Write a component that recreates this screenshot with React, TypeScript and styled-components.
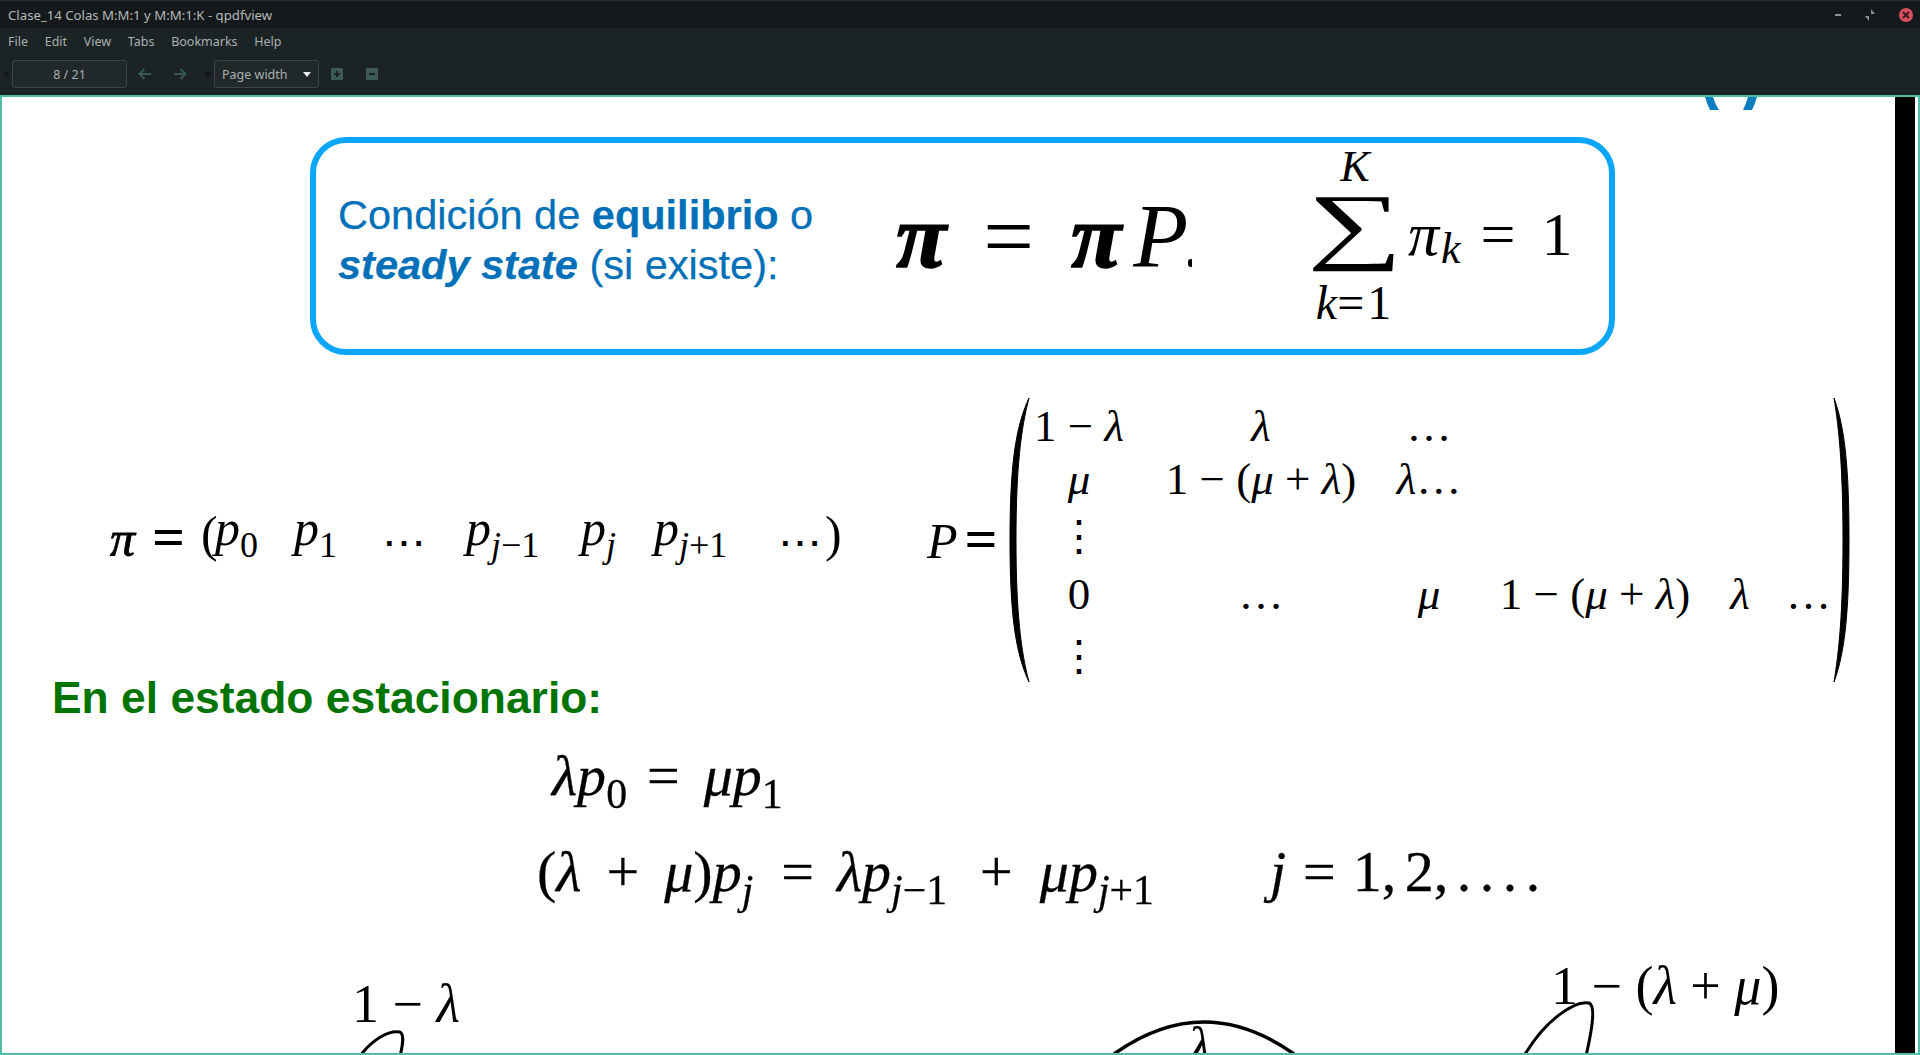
import React from 'react';
import styled, { createGlobalStyle } from 'styled-components';

const GlobalStyle = createGlobalStyle`
  html, body {
    margin: 0;
    padding: 0;
    height: 100%;
    overflow: hidden;
    background: #1b2325;
  }
  #root {
    height: 100%;
  }
`;

const MENU_ITEMS = ['File', 'Edit', 'View', 'Tabs', 'Bookmarks', 'Help'];
const VECTOR_COLUMNS = '42px 49px 14px 79px 88px 84px 115px 73px 124px 47px 20px';

const App = () => {
  return (
    <>
      <GlobalStyle />
      <Window>
        <TitleBar>
          <TitleText>Clase_14 Colas M:M:1 y M:M:1:K - qpdfview</TitleText>
          <WindowControls>
            <MinimizeIcon />
            <svg width="10" height="12" viewBox="0 0 10 12">
              <path d="M6 0 L6 5 L10 5 Z M0 7 L4 7 L4 12 Z" fill="#8c9293" />
            </svg>
            <CloseButton>
              <svg width="8" height="8" viewBox="0 0 8 8">
                <path d="M1 1 L7 7 M7 1 L1 7" stroke="#3a1a20" strokeWidth="2" />
              </svg>
            </CloseButton>
          </WindowControls>
        </TitleBar>
        <MenuBar>
          {MENU_ITEMS.map((item) => (
            <MenuItem key={item}>{item}</MenuItem>
          ))}
        </MenuBar>
        <ToolBar>
          <Grip />
          <PageField>8 / 21</PageField>
          <ArrowButton>
            <svg width="14" height="12" viewBox="0 0 14 12">
              <path d="M13 6 H2 M6.5 1 L1.5 6 L6.5 11" fill="none" stroke="#37584f" strokeWidth="2" />
            </svg>
          </ArrowButton>
          <ArrowButton>
            <svg width="14" height="12" viewBox="0 0 14 12">
              <path d="M1 6 H12 M7.5 1 L12.5 6 L7.5 11" fill="none" stroke="#37584f" strokeWidth="2" />
            </svg>
          </ArrowButton>
          <ComboGrip />
          <ScaleCombo>
            Page width
            <ComboArrow />
          </ScaleCombo>
          <ZoomIcon>
            <svg width="12" height="12" viewBox="0 0 12 12">
              <path d="M0 1 Q0 0 1 0 H11 Q12 0 12 1 V11 Q12 12 11 12 H1 Q0 12 0 11 Z" fill="#3d5a55" />
              <path d="M6 3 V9 M3 6 H9" stroke="#1b2325" strokeWidth="2" />
            </svg>
          </ZoomIcon>
          <ZoomIcon>
            <svg width="12" height="12" viewBox="0 0 12 12">
              <path d="M0 1 Q0 0 1 0 H11 Q12 0 12 1 V11 Q12 12 11 12 H1 Q0 12 0 11 Z" fill="#3d5a55" />
              <path d="M3 6 H9" stroke="#1b2325" strokeWidth="2" />
            </svg>
          </ZoomIcon>
        </ToolBar>
        <Viewer>
          <Sheet>
            <TopClip viewBox="0 0 60 14" width="60" height="14">
              <path d="M3 0 L11 0 Q13 7 17 13 L8 13 Q5 7 3 0 Z M55 0 L46 0 Q44 7 41 13 L50 13 Q53 7 55 0 Z" fill="#0a7cc0" />
            </TopClip>
            <Callout>
              <CalloutText>
                Condición de <b>equilibrio</b> o
                <br />
                <b>
                  <i>steady state</i>
                </b>{' '}
                (si existe):
              </CalloutText>
              <BalanceEq>
                <BoldPi>π</BoldPi>
                <BalanceEquals>=</BalanceEquals>
                <BoldPi>π</BoldPi>
                <BigP>P</BigP>
                <ClippedDot />
              </BalanceEq>
              <SumBlock>
                <SumLimit>K</SumLimit>
                <SumSign>∑</SumSign>
                <SumLimit $wide>
                  k<Upright>=1</Upright>
                </SumLimit>
              </SumBlock>
              <SumTerm>
                <i>π</i>
                <SumIndex>k</SumIndex>
                <SumEquals>=</SumEquals>
                <span>1</span>
              </SumTerm>
            </Callout>

            <FormulaRow>
              <Vector>
                <Sym $drop>π</Sym>
                <HeavyEq $drop>=</HeavyEq>
                <Paren>(</Paren>
                <Sym>
                  p<Sub>0</Sub>
                </Sym>
                <Sym>
                  p<Sub>1</Sub>
                </Sym>
                <Dots>⋯</Dots>
                <Sym>
                  p
                  <Sub>
                    <i>j</i>−1
                  </Sub>
                </Sym>
                <Sym>
                  p
                  <Sub>
                    <i>j</i>
                  </Sub>
                </Sym>
                <Sym>
                  p
                  <Sub>
                    <i>j</i>+1
                  </Sub>
                </Sym>
                <Dots>⋯</Dots>
                <Paren>)</Paren>
              </Vector>
              <MatrixLabel>
                <Sym>P</Sym>
                <HeavyEq>=</HeavyEq>
              </MatrixLabel>
              <Matrix>
                <MatrixBracket width="21" height="284" viewBox="0 0 21 284">
                  <path d="M20 0 C6 30 1 70 1 142 C1 214 6 254 20 284 C12 254 7 214 7 142 C7 70 12 30 20 0 Z" fill="#000" stroke="#000" />
                </MatrixBracket>
                <MatrixGrid>
                  <Cell>
                    1 − <i>λ</i>
                  </Cell>
                  <Cell>
                    <i>λ</i>
                  </Cell>
                  <Cell>…</Cell>
                  <Cell />
                  <Cell />
                  <Cell />

                  <Cell>
                    <i>μ</i>
                  </Cell>
                  <Cell>
                    1 − (<i>μ</i> + <i>λ</i>)
                  </Cell>
                  <Cell>
                    <i>λ</i>…
                  </Cell>
                  <Cell />
                  <Cell />
                  <Cell />

                  <Cell>
                    <VDots>⋮</VDots>
                  </Cell>
                  <Cell />
                  <Cell />
                  <Cell />
                  <Cell />
                  <Cell />

                  <Cell>0</Cell>
                  <Cell>…</Cell>
                  <Cell>
                    <i>μ</i>
                  </Cell>
                  <Cell>
                    1 − (<i>μ</i> + <i>λ</i>)
                  </Cell>
                  <Cell>
                    <i>λ</i>
                  </Cell>
                  <Cell>…</Cell>

                  <Cell>
                    <VDots>⋮</VDots>
                  </Cell>
                  <Cell />
                  <Cell />
                  <Cell />
                  <Cell />
                  <Cell />
                </MatrixGrid>
                <MatrixBracket width="17" height="284" viewBox="0 0 17 284">
                  <path d="M1 0 C12 30 16 70 16 142 C16 214 12 254 1 284 C6 254 10 214 10 142 C10 70 6 30 1 0 Z" fill="#000" stroke="#000" />
                </MatrixBracket>
              </Matrix>
            </FormulaRow>

            <SectionHeading>En el estado estacionario:</SectionHeading>

            <ScannedEq $indent={550} $top={27}>
              <i>λp</i>
              <Sub>0</Sub>
              <Gap $w={20} />=<Gap $w={24} />
              <i>μp</i>
              <Sub>1</Sub>
            </ScannedEq>
            <ScannedEq $indent={535} $top={44}>
              (<i>λ</i>
              <Gap $w={25} />+<Gap $w={25} />
              <i>μ</i>)<i>p</i>
              <Sub>
                <i>j</i>
              </Sub>
              <Gap $w={28} />=<Gap $w={23} />
              <i>λp</i>
              <Sub>
                <i>j</i>−1
              </Sub>
              <Gap $w={33} />+<Gap $w={27} />
              <i>μp</i>
              <Sub>
                <i>j</i>+1
              </Sub>
              <Gap $w={116} />
              <i>j</i>
              <Gap $w={17} />=<Gap $w={17} />
              <Tail>1, 2, . . . .</Tail>
            </ScannedEq>

            <Diagram>
              <DiagramArcs viewBox="2 930 1892 124" width="1892" height="124">
                <path d="M360 1056 C372 1040 388 1030 400 1032 C404 1034 403 1045 400 1056" fill="none" stroke="#000" strokeWidth="3" />
                <path d="M1114 1054 Q1204 990 1294 1054" fill="none" stroke="#000" strokeWidth="3.5" />
                <path d="M1524 1056 C1545 1020 1575 1000 1589 1003 C1596 1006 1592 1030 1586 1056" fill="none" stroke="#000" strokeWidth="3" />
              </DiagramArcs>
              <StateLabel $x={350} $y={49}>
                1 − <i>λ</i>
              </StateLabel>
              <StateLabel $x={1549} $y={31}>
                1 − (<i>λ</i> + <i>μ</i>)
              </StateLabel>
              <StateLabel $x={1186} $y={92}>
                <i>λ</i>
              </StateLabel>
            </Diagram>
          </Sheet>
          <PageGap />
        </Viewer>
      </Window>
    </>
  );
};

export default App;

const Window = styled.div`
  width: 1920px;
  height: 1055px;
  display: flex;
  flex-direction: column;
  overflow: hidden;
  font-family: 'Noto Sans', sans-serif;
`;

const TitleBar = styled.div`
  flex: none;
  height: 27px;
  border-top: 1px solid #272c2e;
  background: #15191b;
  display: flex;
  align-items: center;
  justify-content: space-between;
  padding: 0 7px 0 8px;
`;

const TitleText = styled.span`
  font-size: 13.2px;
  color: #b4b8b8;
`;

const WindowControls = styled.div`
  display: flex;
  align-items: center;
  gap: 24px;
`;

const MinimizeIcon = styled.span`
  width: 6px;
  height: 2px;
  background: #8c9293;
`;

const CloseButton = styled.span`
  width: 14px;
  height: 14px;
  border-radius: 50%;
  background: #d9505f;
  display: flex;
  align-items: center;
  justify-content: center;
`;

const MenuBar = styled.div`
  flex: none;
  height: 25px;
  background: #1b2325;
  display: flex;
  align-items: center;
  padding: 1px 0 0 0;
  box-sizing: border-box;
`;

const MenuItem = styled.span`
  font-size: 12.5px;
  color: #a9b0b0;
  padding: 0 8.7px 0 8px;
`;

const ToolBar = styled.div`
  flex: none;
  height: 42px;
  background: #1b2325;
  display: flex;
  align-items: center;
  padding-left: 4px;
  box-sizing: border-box;
`;

const Grip = styled.span`
  width: 5px;
  height: 5px;
  border-radius: 50%;
  background: #111617;
`;

const ComboGrip = styled(Grip)`
  margin-left: 8px;
`;

const PageField = styled.div`
  width: 115px;
  height: 28px;
  margin-left: 3px;
  box-sizing: border-box;
  border: 1px solid #3e4547;
  border-radius: 3px;
  background: #20282a;
  color: #a9b0b0;
  font-size: 12.5px;
  display: flex;
  align-items: center;
  justify-content: center;
`;

const ArrowButton = styled.span`
  width: 34px;
  display: flex;
  justify-content: center;
  margin-left: 1px;
`;

const ScaleCombo = styled.div`
  width: 105px;
  height: 28px;
  margin-left: 4px;
  box-sizing: border-box;
  border: 1px solid #3e4547;
  border-radius: 3px;
  background: #20282a;
  color: #a9b0b0;
  font-size: 12.5px;
  display: flex;
  align-items: center;
  justify-content: space-between;
  padding: 0 7px;
`;

const ComboArrow = styled.span`
  width: 0;
  height: 0;
  border-left: 4.5px solid transparent;
  border-right: 4.5px solid transparent;
  border-top: 5px solid #e8ecec;
`;

const ZoomIcon = styled.span`
  width: 35px;
  display: flex;
  justify-content: center;
`;

const Viewer = styled.div`
  flex: 1;
  min-height: 0;
  display: flex;
  box-sizing: border-box;
  border: 2px solid #4dbfa6;
  background: #fff;
  padding-right: 3px;
`;

const Sheet = styled.div`
  position: relative;
  flex: 1;
  min-width: 0;
  overflow: hidden;
  background: #fff;
  font-family: 'Liberation Serif', serif;
  color: #000;
`;

const PageGap = styled.div`
  flex: none;
  width: 20px;
  background: #000;
`;

const TopClip = styled.svg`
  position: absolute;
  top: 0;
  left: 1700px;
`;

const Callout = styled.div`
  width: 1305px;
  height: 218px;
  margin: 40px 0 0 308px;
  box-sizing: border-box;
  border: 6px solid #0aa6fb;
  border-radius: 36px;
  display: flex;
  align-items: flex-start;
  padding-left: 22px;
`;

const CalloutText = styled.div`
  flex: none;
  width: 558px;
  margin-top: 47px;
  font-family: 'Liberation Sans', sans-serif;
  font-size: 41.5px;
  line-height: 50px;
  color: #0070b8;
  -webkit-text-stroke: 0.25px #0070b8;
`;

const BalanceEq = styled.div`
  flex: none;
  width: 296px;
  margin-top: 58px;
  display: flex;
  align-items: baseline;
  height: 70px;
`;

const BoldPi = styled.span`
  font-size: 92px;
  line-height: 70px;
  font-weight: 700;
  font-style: italic;
  -webkit-text-stroke: 1.5px #000;
`;

const BalanceEquals = styled.span`
  font-size: 90px;
  line-height: 70px;
  margin: 0 37px;
`;

const BigP = styled.span`
  font-size: 90px;
  line-height: 70px;
  font-style: italic;
  margin-left: 12px;
`;

const ClippedDot = styled.span`
  flex: none;
  width: 4px;
  height: 8px;
  margin-left: 0;
  background: #000;
  border-radius: 3px 0 0 3px;
`;

const SumBlock = styled.div`
  flex: none;
  width: 78px;
  margin-left: 124px;
  margin-top: 2px;
  display: flex;
  flex-direction: column;
  align-items: center;
`;

const SumLimit = styled.span<{ $wide?: boolean }>`
  font-size: ${({ $wide }) => ($wide ? 48 : 44)}px;
  line-height: 44px;
  font-style: italic;
  white-space: nowrap;
`;

const Upright = styled.span`
  font-style: normal;
  letter-spacing: 3px;
`;

const SumSign = styled.span`
  font-family: 'Liberation Serif', serif;
  font-size: 98px;
  line-height: 92px;
  transform: translateY(-11px) scale(1.37, 0.87);
`;

const SumTerm = styled.div`
  margin: 56px 0 0 14px;
  display: flex;
  align-items: baseline;
  font-size: 62px;
  line-height: 70px;
`;

const SumIndex = styled.span`
  font-size: 44px;
  font-style: italic;
  line-height: 0;
  transform: translateY(8px);
  margin-left: 2px;
`;

const SumEquals = styled.span`
  margin: 0 26px 0 20px;
`;

const Tail = styled.span`
  word-spacing: -6px;
`;

const FormulaRow = styled.div`
  margin-top: 41px;
  padding-left: 108px;
  height: 284px;
  display: flex;
  align-items: flex-start;
  font-size: 44px;
`;

const Vector = styled.div`
  flex: none;
  padding-top: 102px;
  display: grid;
  grid-template-columns: ${VECTOR_COLUMNS};
  align-items: baseline;
  width: 735px;
`;

const Sym = styled.span<{ $drop?: boolean }>`
  font-style: italic;
  font-size: 50px;
  line-height: 56px;
  white-space: nowrap;
  transform: translateY(${({ $drop }) => ($drop ? 11 : 0)}px);
  -webkit-text-stroke: ${({ $drop }) => ($drop ? '0.8px #000' : '0')};
`;

const Sub = styled.sub`
  font-size: 0.72em;
  line-height: 0;
  font-style: normal;
  vertical-align: -0.32em;
`;

const HeavyEq = styled.span<{ $drop?: boolean }>`
  font-size: 58px;
  line-height: 56px;
  font-weight: 700;
  font-family: 'Liberation Serif', serif;
  transform: translateY(${({ $drop }) => ($drop ? 11 : 0)}px);
`;

const Paren = styled.span`
  font-size: 50px;
  line-height: 56px;
  transform: translateY(6px);
`;

const Dots = styled.span`
  font-family: 'DejaVu Serif', serif;
  font-size: 44px;
  line-height: 56px;
  transform: translateY(12px);
`;

const MatrixLabel = styled.div`
  flex: none;
  width: 82px;
  margin-left: 82px;
  display: flex;
  gap: 7px;
  padding-top: 115px;
  align-items: baseline;
`;

const Matrix = styled.div`
  flex: none;
  display: flex;
  align-items: flex-start;
`;

const MatrixBracket = styled.svg`
  flex: none;
  display: block;
  margin-top: 2px;
`;

const MatrixGrid = styled.div`
  flex: none;
  margin: 0 6px 0 4px;
  display: grid;
  grid-template-columns: 90px 194px 62px 190px 20px 37px;
  grid-template-rows: 54px 53px 57px 58px 62px;
  column-gap: 40px;
  justify-items: center;
  align-items: end;
  font-size: 45px;
  line-height: 48px;
  white-space: nowrap;
`;

const Cell = styled.span``;

const VDots = styled.span`
  font-family: 'DejaVu Serif', serif;
  font-size: 42px;
`;

const SectionHeading = styled.h2`
  margin: -7px 0 0 50px;
  font-family: 'Liberation Sans', sans-serif;
  font-size: 44.4px;
  line-height: 50px;
  font-weight: 700;
  color: #007400;
`;

const ScannedEq = styled.div<{ $indent: number; $top: number }>`
  margin: ${({ $top }) => $top}px 0 0 ${({ $indent }) => $indent}px;
  font-size: 58px;
  line-height: 52px;
  white-space: nowrap;
  filter: blur(0.7px);
  -webkit-text-stroke: 0.3px #000;
`;

const Gap = styled.span<{ $w: number }>`
  display: inline-block;
  width: ${({ $w }) => $w}px;
`;

const Diagram = styled.div`
  position: relative;
  height: 124px;
  margin-top: 32px;
`;

const DiagramArcs = styled.svg`
  position: absolute;
  inset: 0;
`;

const StateLabel = styled.span<{ $x: number; $y: number }>`
  position: absolute;
  left: ${({ $x }) => $x}px;
  top: ${({ $y }) => $y}px;
  font-size: 54px;
  line-height: 50px;
  white-space: nowrap;
`;
